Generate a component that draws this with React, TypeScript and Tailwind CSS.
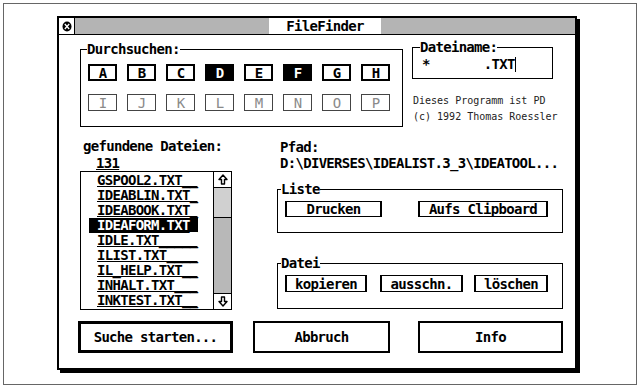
import React from 'react';

const files = [
    'GSPOOL2.TXT__',
    'IDEABLIN.TXT_',
    'IDEABOOK.TXT_',
    'IDEAFORM.TXT_',
    'IDLE.TXT_____',
    'ILIST.TXT____',
    'IL_HELP.TXT__',
    'INHALT.TXT___',
    'INKTEST.TXT__',
];
const selectedFile = 'IDEAFORM.TXT_';

const drivesTop = ['A', 'B', 'C', 'D', 'E', 'F', 'G', 'H'];
const drivesBottom = ['I', 'J', 'K', 'L', 'M', 'N', 'O', 'P'];
const activeDrives = ['D', 'F'];

const CloseGlyph = () => (
    <svg width="10" height="11" viewBox="0 0 10 11">
        <ellipse cx="5" cy="5.5" rx="4.5" ry="5" fill="black" />
        <path d="M2.8 3 L7.2 8 M7.2 3 L2.8 8" stroke="white" strokeWidth="1.3" />
    </svg>
);

const Arrow = ({ down }: { down?: boolean }) => (
    <svg width="10" height="11" viewBox="0 0 10 11" className={down ? 'rotate-180' : ''}>
        <path
            d="M5 1 L9 5.5 H6.5 V10 H3.5 V5.5 H1 Z"
            fill="none"
            stroke="black"
            strokeWidth="1.4"
            strokeLinejoin="round"
        />
    </svg>
);

const DriveButton = ({ letter, disabled }: { letter: string; disabled?: boolean }) => {
    const active = activeDrives.includes(letter);
    return (
        <div
            className={
                disabled
                    ? 'w-[29px] h-[17px] flex items-center justify-center border border-[#444] text-[#8a8a8a] font-normal leading-none'
                    : active
                    ? 'w-[29px] h-[17px] flex items-center justify-center border-2 border-black bg-black text-white leading-none'
                    : 'w-[29px] h-[17px] flex items-center justify-center border-2 border-black leading-none'
            }
        >
            {letter}
        </div>
    );
};

const App: React.FC = () => {
    return (
        <div className="w-[640px] h-[388px] bg-white p-[3px] text-black [font-family:'DejaVu_Sans_Mono','Liberation_Mono',monospace]">
            <div className="h-full border border-[#666] pl-[53px] pt-[12px]">
                <div className="w-[520px] h-[354px] border-2 border-black shadow-[3px_3px_0_#000] bg-white flex flex-col">
                    {/* title bar */}
                    <div className="h-[17px] shrink-0 flex border-b border-black bg-[#b4b4b4]">
                        <div className="w-[16px] border-r border-black bg-white flex items-center justify-center">
                            <CloseGlyph />
                        </div>
                        <div className="flex-1 flex justify-center">
                            <div className="w-[112px] bg-white text-center text-[14px] font-bold tracking-[-0.7px] leading-[16px]">
                                FileFinder
                            </div>
                        </div>
                    </div>

                    <div className="flex flex-col pl-[21px] text-[14px] font-bold tracking-[-0.7px] leading-4">
                        {/* top row */}
                        <div className="flex items-start mt-[4px]">
                            <fieldset className="mt-[2px] w-[323px] h-[86px] border border-black">
                                <legend className="ml-[6px] leading-4">Durchsuchen:</legend>
                                <div className="mt-[7px] pl-[7px] flex flex-col gap-[13px]">
                                    <div className="flex gap-[10px]">
                                        {drivesTop.map(d => (
                                            <DriveButton key={d} letter={d} />
                                        ))}
                                    </div>
                                    <div className="flex gap-[10px]">
                                        {drivesBottom.map(d => (
                                            <DriveButton key={d} letter={d} disabled />
                                        ))}
                                    </div>
                                </div>
                            </fieldset>

                            <div className="ml-[9px] w-[141px]">
                                <fieldset className="w-[141px] h-[40px] border border-black">
                                    <legend className="ml-[7px] leading-4">Dateiname:</legend>
                                    <div className="mt-[1px] pl-[9px] flex items-center whitespace-pre">
                                        <span>{'*       .TXT'}</span>
                                        <span className="w-px h-[15px] bg-black" />
                                    </div>
                                </fieldset>
                                <div className="mt-[14px] pl-[1px] text-[10px] font-normal tracking-normal leading-4 text-[#222] whitespace-nowrap">
                                    <div>Dieses Programm ist PD</div>
                                    <div>(c) 1992 Thomas Roessler</div>
                                </div>
                            </div>
                        </div>

                        {/* middle row */}
                        <div className="flex mt-[11px]">
                            <div className="w-[152px]">
                                <div className="pl-[3px]">gefundene Dateien:</div>
                                <div className="pl-[16px] mt-[1px] underline decoration-1 underline-offset-[1px]">131</div>
                                <div className="h-[139px] w-[152px] border border-black flex">
                                    <div className="flex-1 pt-[1px]">
                                        {files.map(f => (
                                            <div key={f} className="h-[15px] flex">
                                                <span
                                                    className={
                                                        f === selectedFile
                                                            ? 'ml-[8px] w-[109px] pl-[8px] leading-[15px] bg-black text-white'
                                                            : 'ml-[8px] w-[109px] pl-[8px] leading-[15px] underline decoration-1 underline-offset-[1px]'
                                                    }
                                                >
                                                    {f}
                                                </span>
                                            </div>
                                        ))}
                                    </div>
                                    <div className="w-[18px] border-l border-black flex flex-col">
                                        <div className="h-[16px] border-b border-black flex items-center justify-center">
                                            <Arrow />
                                        </div>
                                        <div className="h-[30px] bg-[#d0d0d0] border-b border-black" />
                                        <div className="flex-1 bg-[#b8b8b8]" />
                                        <div className="h-[16px] border-t border-black flex items-center justify-center">
                                            <Arrow down />
                                        </div>
                                    </div>
                                </div>
                            </div>

                            <div className="ml-[45px] w-[286px]">
                                <div className="mt-[1px] pl-[3px]">Pfad:</div>
                                <div className="pl-[3px] whitespace-nowrap">D:\DIVERSES\IDEALIST.3_3\IDEATOOL...</div>

                                <fieldset className="mt-[10px] h-[52px] border border-black">
                                    <legend className="ml-[3px] leading-4">Liste</legend>
                                    <div className="mt-[4px] pl-[7px] flex">
                                        <div className="w-[97px] h-[16px] border-y border-x-2 border-black flex items-center justify-center leading-none">
                                            Drucken
                                        </div>
                                        <div className="ml-[36px] w-[130px] h-[16px] border-y border-x-2 border-black flex items-center justify-center leading-none">
                                            Aufs Clipboard
                                        </div>
                                    </div>
                                </fieldset>

                                <fieldset className="mt-[22px] h-[54px] border border-black">
                                    <legend className="ml-[3px] leading-4">Datei</legend>
                                    <div className="mt-[4px] pl-[7px] flex">
                                        <div className="w-[82px] h-[17px] border-y border-x-2 border-black flex items-center justify-center leading-none">
                                            kopieren
                                        </div>
                                        <div className="ml-[13px] w-[83px] h-[17px] border-y border-x-2 border-black flex items-center justify-center leading-none">
                                            ausschn.
                                        </div>
                                        <div className="ml-[11px] w-[74px] h-[17px] border-y border-x-2 border-black flex items-center justify-center leading-none">
                                            löschen
                                        </div>
                                    </div>
                                </fieldset>
                            </div>
                        </div>

                        {/* bottom buttons */}
                        <div className="flex mt-[11px]">
                            <div className="ml-[-2px] w-[155px] h-[32px] border-[3px] border-black flex items-center justify-center">
                                Suche starten...
                            </div>
                            <div className="ml-[20px] w-[137px] h-[32px] border-2 border-black flex items-center justify-center">
                                Abbruch
                            </div>
                            <div className="ml-[28px] w-[145px] h-[32px] border-2 border-black flex items-center justify-center">
                                Info
                            </div>
                        </div>
                    </div>
                </div>
            </div>
        </div>
    );
};

export default App;
